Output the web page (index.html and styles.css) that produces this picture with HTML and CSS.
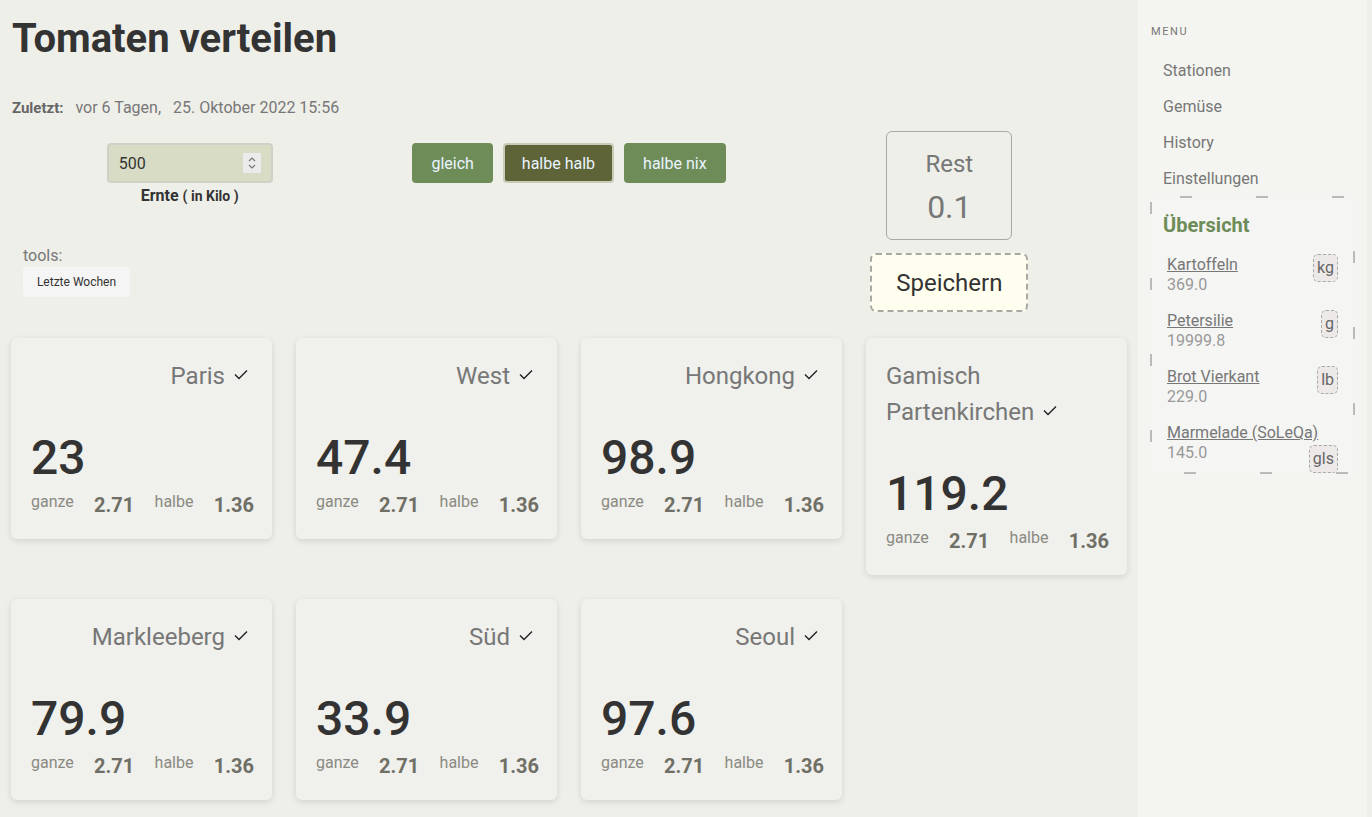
FILE: index.html
```html
<!DOCTYPE html>
<html lang="de">
<head>
<meta charset="utf-8">
<title>Tomaten verteilen</title>
<link rel="stylesheet" href="styles.css">
</head>
<body>
<div class="page">
  <main class="main">
    <h1 class="title">Tomaten verteilen</h1>
    <div class="last">
      <b>Zuletzt:</b><span>vor 6 Tagen,</span><span>25. Oktober 2022 15:56</span>
    </div>

    <section class="controls">
      <div class="col col-input">
        <div class="harvest">
          <div class="num-input">
            <span class="num-value">500</span>
            <span class="spin">
              <svg width="10" height="16" viewBox="0 0 10 16"><polyline points="2,6 5,3 8,6" fill="none" stroke="#777" stroke-width="1.2"/><polyline points="2,10 5,13 8,10" fill="none" stroke="#777" stroke-width="1.2"/></svg>
            </span>
          </div>
          <div class="harvest-label">Ernte <small>( in Kilo )</small></div>
        </div>
        <div class="tools">
          <div class="tools-label">tools:</div>
          <button class="tool-btn">Letzte Wochen</button>
        </div>
      </div>

      <div class="col col-modes">
        <button class="mode-btn">gleich</button>
        <button class="mode-btn active">halbe halb</button>
        <button class="mode-btn">halbe nix</button>
      </div>

      <div class="col col-rest">
        <div class="rest">
          <div class="rest-label">Rest</div>
          <div class="rest-value">0.1</div>
        </div>
        <button class="save">Speichern</button>
      </div>
    </section>

    <section class="cards">
      <article class="card">
        <div class="card-head"><span class="card-title">Paris<svg class="check" width="14" height="11" viewBox="0 0 14 11"><polyline points="1,5.5 5,9.5 13,1.5" fill="none" stroke="#222" stroke-width="1.4"/></svg></span></div>
        <div class="card-num">23</div>
        <div class="card-foot"><span class="lbl">ganze</span><span class="val">2.71</span><span class="lbl">halbe</span><span class="val">1.36</span></div>
      </article>
      <article class="card">
        <div class="card-head"><span class="card-title">West<svg class="check" width="14" height="11" viewBox="0 0 14 11"><polyline points="1,5.5 5,9.5 13,1.5" fill="none" stroke="#222" stroke-width="1.4"/></svg></span></div>
        <div class="card-num">47.4</div>
        <div class="card-foot"><span class="lbl">ganze</span><span class="val">2.71</span><span class="lbl">halbe</span><span class="val">1.36</span></div>
      </article>
      <article class="card">
        <div class="card-head"><span class="card-title">Hongkong<svg class="check" width="14" height="11" viewBox="0 0 14 11"><polyline points="1,5.5 5,9.5 13,1.5" fill="none" stroke="#222" stroke-width="1.4"/></svg></span></div>
        <div class="card-num">98.9</div>
        <div class="card-foot"><span class="lbl">ganze</span><span class="val">2.71</span><span class="lbl">halbe</span><span class="val">1.36</span></div>
      </article>
      <article class="card">
        <div class="card-head"><span class="card-title">Gamisch Partenkirchen<svg class="check" width="14" height="11" viewBox="0 0 14 11"><polyline points="1,5.5 5,9.5 13,1.5" fill="none" stroke="#222" stroke-width="1.4"/></svg></span></div>
        <div class="card-num">119.2</div>
        <div class="card-foot"><span class="lbl">ganze</span><span class="val">2.71</span><span class="lbl">halbe</span><span class="val">1.36</span></div>
      </article>
      <article class="card">
        <div class="card-head"><span class="card-title">Markleeberg<svg class="check" width="14" height="11" viewBox="0 0 14 11"><polyline points="1,5.5 5,9.5 13,1.5" fill="none" stroke="#222" stroke-width="1.4"/></svg></span></div>
        <div class="card-num">79.9</div>
        <div class="card-foot"><span class="lbl">ganze</span><span class="val">2.71</span><span class="lbl">halbe</span><span class="val">1.36</span></div>
      </article>
      <article class="card">
        <div class="card-head"><span class="card-title">Süd<svg class="check" width="14" height="11" viewBox="0 0 14 11"><polyline points="1,5.5 5,9.5 13,1.5" fill="none" stroke="#222" stroke-width="1.4"/></svg></span></div>
        <div class="card-num">33.9</div>
        <div class="card-foot"><span class="lbl">ganze</span><span class="val">2.71</span><span class="lbl">halbe</span><span class="val">1.36</span></div>
      </article>
      <article class="card">
        <div class="card-head"><span class="card-title">Seoul<svg class="check" width="14" height="11" viewBox="0 0 14 11"><polyline points="1,5.5 5,9.5 13,1.5" fill="none" stroke="#222" stroke-width="1.4"/></svg></span></div>
        <div class="card-num">97.6</div>
        <div class="card-foot"><span class="lbl">ganze</span><span class="val">2.71</span><span class="lbl">halbe</span><span class="val">1.36</span></div>
      </article>
    </section>
  </main>

  <aside class="sidebar">
    <div class="menu-title">MENU</div>
    <nav class="menu">
      <a class="menu-item">Stationen</a>
      <a class="menu-item">Gemüse</a>
      <a class="menu-item">History</a>
      <a class="menu-item">Einstellungen</a>
    </nav>
    <div class="overview">
      <svg class="dash-frame" width="100%" height="100%"><rect x="0" y="0" width="100%" height="100%" fill="none" stroke="#808080" stroke-width="1" stroke-dasharray="12 64" stroke-dashoffset="47"/></svg>
      <div class="ov-title">Übersicht</div>
      <div class="ov-item">
        <div class="ov-text"><a class="ov-name">Kartoffeln</a><div class="ov-val">369.0</div></div>
        <span class="unit">kg</span>
      </div>
      <div class="ov-item">
        <div class="ov-text"><a class="ov-name">Petersilie</a><div class="ov-val">19999.8</div></div>
        <span class="unit">g</span>
      </div>
      <div class="ov-item">
        <div class="ov-text"><a class="ov-name">Brot Vierkant</a><div class="ov-val">229.0</div></div>
        <span class="unit">lb</span>
      </div>
      <div class="ov-item">
        <div class="ov-text"><a class="ov-name">Marmelade (SoLeQa)</a><div class="ov-val">145.0</div></div>
        <span class="unit unit-low">gls</span>
      </div>
    </div>
  </aside>
</div>
</body>
</html>
```

FILE: styles.css
```css
* { box-sizing: border-box; }

html, body {
  margin: 0;
  padding: 0;
  background: #efefea;
  font-family: Roboto, "Liberation Sans", sans-serif;
  color: #333;
}

.page {
  display: flex;
  min-height: 100vh;
}

.main {
  flex: 1;
  min-width: 0;
}

.title {
  margin: 0;
  padding: 15px 0 0 12px;
  font-size: 40px;
  line-height: 48px;
  font-weight: 700;
  color: #333;
}

.last {
  margin-top: 35px;
  padding-left: 12px;
  display: flex;
  gap: 12px;
  align-items: baseline;
  line-height: 20px;
  font-size: 16px;
  color: #777;
}
.last b {
  font-size: 15px;
  color: #666;
}

.controls {
  margin-top: 13px;
  display: grid;
  grid-template-columns: 1fr 1fr 1fr;
  align-items: start;
}

.col-input {
  padding-top: 12px;
}

.harvest {
  display: flex;
  flex-direction: column;
  align-items: center;
}

.num-input {
  width: 166px;
  height: 40px;
  background: #d8dcc4;
  border: 2px solid #d0d1c6;
  border-radius: 4px;
  display: flex;
  align-items: center;
  justify-content: space-between;
  padding: 0 10px 0 10px;
  font-size: 16px;
  color: #333;
}

.spin {
  width: 18px;
  height: 20px;
  background: #ebebeb;
  display: flex;
  align-items: center;
  justify-content: center;
}

.harvest-label {
  margin-top: 4px;
  line-height: 18px;
  font-size: 16px;
  font-weight: 700;
  color: #333;
}
.harvest-label small {
  font-size: 14px;
}

.tools {
  margin-top: 41px;
  padding-left: 23px;
}
.tools-label {
  font-size: 16px;
  line-height: 20px;
  color: #777;
}
.tool-btn {
  margin-top: 1px;
  height: 30px;
  width: 107px;
  border: none;
  border-radius: 3px;
  background: #f5f5f5;
  font-family: inherit;
  font-size: 12px;
  color: #333;
}

.col-modes {
  padding-top: 12px;
  display: flex;
  justify-content: center;
  gap: 10px;
}

.mode-btn {
  height: 40px;
  padding: 0 19px;
  border: none;
  border-radius: 4px;
  background: #6e8c58;
  color: #eaf4ff;
  font-family: inherit;
  font-size: 16px;
}
.mode-btn.active {
  background: #5e6437;
  border: 2px solid #c9cbb9;
  padding: 0 17px;
}

.col-rest {
  display: flex;
  flex-direction: column;
  align-items: center;
  padding-left: 2px;
}

.rest {
  width: 126px;
  height: 109px;
  border: 1px solid #a9a9a4;
  border-radius: 6px;
  padding-top: 17px;
  text-align: center;
  color: #777;
}
.rest-label {
  font-size: 24px;
  line-height: 30px;
}
.rest-value {
  margin-top: 8px;
  font-size: 32px;
  line-height: 40px;
}

.save {
  margin-top: 13px;
  width: 158px;
  height: 59px;
  background: #fffeef;
  border: 2px dashed #a8a8a4;
  border-radius: 6px;
  font-family: inherit;
  font-size: 24px;
  color: #333;
}

.cards {
  margin-top: 26px;
  padding: 0 11px 16px;
  display: flex;
  flex-wrap: wrap;
  gap: 24px;
  align-items: flex-start;
}

.card {
  width: 261px;
  background: #f0f0ec;
  border-radius: 6px;
  box-shadow: 0 2px 6px rgba(0, 0, 0, 0.12);
  padding: 20px 18px 20px 20px;
}

.card-head {
  display: flex;
  justify-content: flex-end;
  padding-right: 6px;
}
.card-title {
  font-size: 24px;
  line-height: 36px;
  color: #777;
}
.check {
  margin-left: 9px;
  vertical-align: 4px;
}

.card-num {
  margin-top: 34px;
  font-size: 48px;
  line-height: 60px;
  font-weight: 500;
  color: #333;
}

.card-foot {
  margin-top: 2px;
  display: flex;
  justify-content: space-between;
  align-items: flex-start;
}
.card-foot .lbl {
  padding-top: 2px;
  font-size: 16px;
  line-height: 20px;
  color: #8a8a82;
}
.card-foot .val {
  padding-top: 1px;
  font-size: 20px;
  line-height: 28px;
  font-weight: 700;
  color: #6f6f66;
}

.sidebar {
  width: 229px;
  margin-right: 5px;
  background: #f4f5f0;
  padding: 25px 13px 0;
}

.menu-title {
  font-size: 11px;
  line-height: 14px;
  letter-spacing: 1.6px;
  color: #777;
}

.menu {
  margin-top: 14px;
  display: flex;
  flex-direction: column;
}
.menu-item {
  padding-left: 12px;
  font-size: 16px;
  line-height: 36px;
  color: #777;
}

.overview {
  position: relative;
  background: #f5f5f4;
  padding: 12px 16px 0 0;
}
.dash-frame {
  position: absolute;
  left: 0;
  top: 0;
  overflow: visible;
  pointer-events: none;
}

.ov-title {
  padding-left: 12px;
  font-size: 20px;
  line-height: 32px;
  font-weight: 700;
  color: #6e8c58;
}

.ov-item {
  margin-top: 14px;
  padding-left: 16px;
  display: flex;
  justify-content: space-between;
  align-items: flex-start;
}
.ov-item + .ov-item {
  margin-top: 16px;
}
.ov-text {
  flex: 1;
  min-width: 0;
}
.ov-name {
  display: block;
  white-space: nowrap;
  font-size: 16px;
  line-height: 20px;
  color: #777;
  text-decoration: underline;
}
.ov-val {
  font-size: 16px;
  line-height: 20px;
  color: #999;
}

.unit {
  flex: none;
  height: 28px;
  margin-top: -1px;
  padding: 0 3px;
  border: 1px dashed #a9a9a9;
  border-radius: 5px;
  background: #eee9e9;
  font-size: 16px;
  line-height: 26px;
  color: #666;
}
.unit-low {
  margin-top: 22px;
}
```
